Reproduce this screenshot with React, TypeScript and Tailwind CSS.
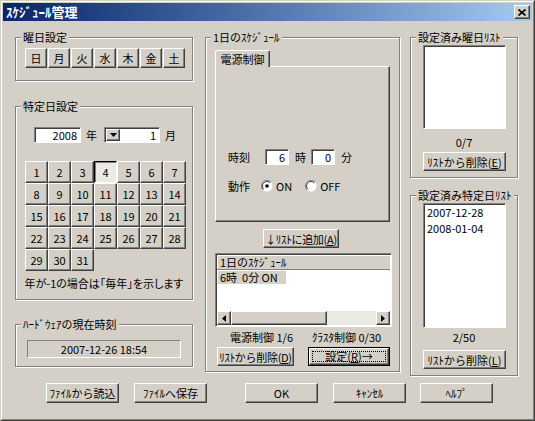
import React from 'react';

const raised =
  'bg-[#d4d0c8] border border-t-white border-l-white border-r-[#404040] border-b-[#404040] shadow-[inset_-1px_-1px_0_#808080]';
const sunken =
  'border border-t-[#808080] border-l-[#808080] border-r-white border-b-white shadow-[inset_1px_1px_0_#404040]';
const etched = 'border border-[#808080] shadow-[inset_1px_1px_0_#fff,1px_1px_0_#fff]';

interface BoxProps {
  className?: string;
  children?: React.ReactNode;
}

const Group: React.FC<BoxProps & { title: string }> = ({ title, className = '', children }) => (
  <fieldset className={`${etched} ${className}`}>
    <legend className="ml-[5px] px-[2px] leading-[14px] bg-[#d4d0c8]">{title}</legend>
    {children}
  </fieldset>
);

const Btn: React.FC<BoxProps> = ({ className = '', children }) => (
  <button className={`${raised} flex items-center justify-center whitespace-nowrap leading-[12px] ${className}`}>
    {children}
  </button>
);

const Edit: React.FC<BoxProps> = ({ className = '', children }) => (
  <div className={`${sunken} bg-white h-[16px] flex items-center justify-end pr-[3px] ${className}`}>{children}</div>
);

const Radio: React.FC<{ checked?: boolean; className?: string }> = ({ checked, className = '' }) => (
  <svg width="12" height="12" viewBox="0 0 12 12" className={className}>
    <circle cx="6" cy="6" r="5.5" fill="#fff" />
    <path d="M10 2A5.5 5.5 0 0 0 2 10" stroke="#808080" strokeWidth="1" fill="none" />
    <path d="M9.2 2.8A4.5 4.5 0 0 0 2.8 9.2" stroke="#404040" strokeWidth="1" fill="none" />
    {checked && <circle cx="6" cy="6" r="1.8" fill="#000" />}
  </svg>
);

const Tri: React.FC<{ dir: 'down' | 'left' | 'right' }> = ({ dir }) => {
  if (dir === 'down')
    return (
      <svg width="7" height="4" viewBox="0 0 7 4">
        <path d="M0 0h7L3.5 4z" fill="#000" />
      </svg>
    );
  return (
    <svg width="4" height="7" viewBox="0 0 4 7">
      <path d={dir === 'left' ? 'M4 0v7L0 3.5z' : 'M0 0v7l4-3.5z'} fill="#000" />
    </svg>
  );
};

const days = ['日', '月', '火', '水', '木', '金', '土'];
const dates = Array.from({ length: 31 }, (_, i) => i + 1);

const LeftColumn: React.FC = () => (
  <div className="w-[178px] flex flex-col">
    <Group title="曜日設定" className="h-[51px]">
      <div className="flex gap-px pl-[9px] pt-[4px]">
        {days.map((d) => (
          <Btn key={d} className="w-[22px] h-[20px]">
            {d}
          </Btn>
        ))}
      </div>
    </Group>

    <Group title="特定日設定" className="mt-[18px] h-[201px]">
      <div className="flex items-center pl-[18px] mt-[14px]">
        <Edit className="w-[47px]">2008</Edit>
        <span className="ml-[5px]">年</span>
        <div className={`${sunken} bg-white ml-[7px] w-[56px] h-[16px] flex items-center pl-px`}>
          <div className={`${raised} w-[14px] h-[12px] flex items-center justify-center`}>
            <Tri dir="down" />
          </div>
          <span className="flex-1 text-right pr-[3px]">1</span>
        </div>
        <span className="ml-[5px]">月</span>
      </div>

      <div className="grid grid-cols-[repeat(7,23px)] auto-rows-[22px] ml-[9px] mt-[18px]">
        {dates.map((n) =>
          n === 4 ? (
            <div
              key={n}
              className="bg-[#eceae5] border border-t-black border-l-black border-r-white border-b-white shadow-[inset_1px_1px_0_#808080] flex items-center justify-center"
            >
              {n}
            </div>
          ) : (
            <Btn key={n}>{n}</Btn>
          )
        )}
      </div>

      <div className="text-center mt-[6px] leading-[12px] [font-feature-settings:'palt']">
        年が-1の場合は「毎年」を示します
      </div>
    </Group>

    <Group title="ﾊｰﾄﾞｳｪｱの現在時刻" className="mt-[17px] h-[50px]">
      <div className="ml-[11px] mt-[9px] w-[154px] h-[18px] border border-t-[#808080] border-l-[#808080] border-r-white border-b-white flex items-center justify-center">
        2007-12-26 18:54
      </div>
    </Group>
  </div>
);

const MiddleColumn: React.FC = () => (
  <Group title="1日のｽｹｼﾞｭｰﾙ" className="ml-[12px] w-[195px] h-[342px]">
    <div className="ml-[9px] mt-[6px]">
      <div className="relative z-10 -mb-px w-[55px] h-[17px] bg-[#d4d0c8] border-t border-l border-r border-t-white border-l-white border-r-[#404040] rounded-t-[2px] shadow-[inset_-1px_0_0_#808080] flex items-center justify-center">
        電源制御
      </div>
      <div className="w-[175px] h-[156px] border border-t-white border-l-white border-r-[#404040] border-b-[#404040] shadow-[inset_-1px_-1px_0_#808080]">
        <div className="flex items-center pl-[12px] mt-[82px]">
          <span className="w-[37px]">時刻</span>
          <Edit className="w-[24px]">6</Edit>
          <span className="ml-[6px]">時</span>
          <Edit className="ml-[5px] w-[24px]">0</Edit>
          <span className="ml-[6px]">分</span>
        </div>
        <div className="flex items-center pl-[12px] mt-[15px] h-[12px]">
          <span className="w-[33px]">動作</span>
          <Radio checked />
          <span className="ml-[3px]">ON</span>
          <Radio className="ml-[13px]" />
          <span className="ml-[3px]">OFF</span>
        </div>
      </div>
    </div>

    <Btn className="ml-[57px] mt-[7px] w-[76px] h-[19px] tracking-[-0.3px]">
      ↓ﾘｽﾄに追加(<u>A</u>)
    </Btn>

    <div className={`${sunken} bg-white ml-[9px] mt-[5px] w-[177px] h-[74px] p-px flex flex-col`}>
      <div className="h-[15px] bg-[#d4d0c8] border-b border-b-[#808080] pl-[3px] leading-[14px] shadow-[inset_1px_1px_0_#fff]">
        1日のｽｹｼﾞｭｰﾙ
      </div>
      <div className="flex-1 pt-px">
        <span className="inline-block bg-[#d4d0c8] ml-px pl-[2px] pr-[8px] leading-[13px]">6時&nbsp; 0分 ON</span>
      </div>
      <div className="h-[14px] flex">
        <div className={`${raised} w-[14px] flex items-center justify-center`}>
          <Tri dir="left" />
        </div>
        <div className={`${raised} w-[96px]`} />
        <div className="flex-1 bg-[#ebe9e4]" />
        <div className={`${raised} w-[14px] flex items-center justify-center`}>
          <Tri dir="right" />
        </div>
      </div>
    </div>

    <div className="flex mt-[4px] h-[12px] leading-[12px]">
      <span className="ml-[24px] w-[82px]">電源制御 1/6</span>
      <span>ｸﾗｽﾀ制御 0/30</span>
    </div>

    <div className="flex mt-[4px]">
      <Btn className="ml-[11px] w-[77px] h-[19px] tracking-[-0.3px]">
        ﾘｽﾄから削除(<u>D</u>)
      </Btn>
      <button className="ml-[14px] w-[82px] h-[19px] border border-black bg-[#d4d0c8]">
        <div className={`${raised} h-full p-[2px]`}>
          <div className="h-full border border-dotted border-black flex items-center justify-center whitespace-nowrap leading-[11px]">
            設定(<u>R</u>)→
          </div>
        </div>
      </button>
    </div>
  </Group>
);

const RightColumn: React.FC = () => (
  <div className="ml-[10px] w-[108px] flex flex-col">
    <Group title="設定済み曜日ﾘｽﾄ" className="h-[148px]">
      <div className={`${sunken} bg-white ml-[12px] mt-[1px] w-[83px] h-[84px]`} />
      <div className="text-center leading-[12px] mt-[7px]">0/7</div>
      <Btn className="ml-[12px] mt-[4px] w-[83px] h-[19px]">
        ﾘｽﾄから削除(<u>E</u>)
      </Btn>
    </Group>

    <Group title="設定済み特定日ﾘｽﾄ" className="mt-[10px] h-[188px]">
      <div className={`${sunken} bg-white ml-[12px] mt-[1px] w-[83px] h-[125px] pl-[3px] leading-[16px]`}>
        <div>2007-12-28</div>
        <div>2008-01-04</div>
      </div>
      <div className="text-center leading-[12px] mt-[3px]">2/50</div>
      <Btn className="ml-[12px] mt-[7px] w-[83px] h-[19px]">
        ﾘｽﾄから削除(<u>L</u>)
      </Btn>
    </Group>
  </div>
);

export default function App() {
  return (
    <div className="w-[535px] h-[421px] bg-[#d4d0c8] text-black text-[11px] leading-[12px] font-['Noto_Sans_CJK_JP',sans-serif] border border-t-[#d4d0c8] border-l-[#d4d0c8] border-r-[#404040] border-b-[#404040]">
      <div className="h-full flex flex-col p-px border border-t-white border-l-white border-r-[#808080] border-b-[#808080]">
        <div className="h-[18px] flex items-center justify-between pl-[3px] pr-[2px] bg-linear-to-r from-[#0a246a] to-[#a6caf0]">
          <span className="text-white font-bold text-[13px] leading-[14px]">ｽｹｼﾞｭｰﾙ管理</span>
          <button className={`${raised} w-[16px] h-[14px] flex items-center justify-center`}>
            <svg width="8" height="7" viewBox="0 0 8 7">
              <path d="M0.5 0.5l7 6M7.5 0.5l-7 6" stroke="#000" strokeWidth="1.6" />
            </svg>
          </button>
        </div>

        <div className="flex flex-col pl-[12px] pt-[9px]">
          <div className="flex items-start">
            <LeftColumn />
            <MiddleColumn />
            <RightColumn />
          </div>

          <div className="flex mt-[7px]">
            <Btn className="ml-[31px] w-[73px] h-[20px]">ﾌｧｲﾙから読込</Btn>
            <Btn className="ml-[15px] w-[73px] h-[20px]">ﾌｧｲﾙへ保存</Btn>
            <Btn className="ml-[38px] w-[73px] h-[20px]">OK</Btn>
            <Btn className="ml-[15px] w-[73px] h-[20px]">ｷｬﾝｾﾙ</Btn>
            <Btn className="ml-[14px] w-[73px] h-[20px]">ﾍﾙﾌﾟ</Btn>
          </div>
        </div>
      </div>
    </div>
  );
}
